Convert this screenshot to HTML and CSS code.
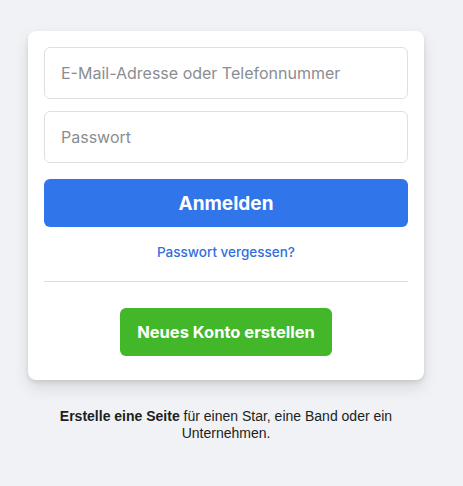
FILE: index.html
```html
<!DOCTYPE html>
<html lang="de">
<head>
<meta charset="utf-8">
<title>Anmelden</title>
<link rel="stylesheet" href="styles.css">
</head>
<body>
<div class="wrap">
  <div class="card">
    <form class="form">
      <input class="field" type="text" placeholder="E-Mail-Adresse oder Telefonnummer">
      <input class="field" type="password" placeholder="Passwort">
      <button class="login" type="button">Anmelden</button>
    </form>
    <a class="forgot" href="#">Passwort vergessen?</a>
    <div class="divider"></div>
    <div class="create-row">
      <button class="create" type="button">Neues Konto erstellen</button>
    </div>
  </div>
  <p class="note"><b>Erstelle eine Seite</b> für einen Star, eine Band oder ein Unternehmen.</p>
</div>
</body>
</html>
```
FILE: styles.css
```css
html, body {
  margin: 0;
  padding: 0;
  background: #f0f2f5;
}
body {
  font-family: Inter, "Liberation Sans", Arial, sans-serif;
}
.wrap {
  width: 396px;
  padding: 31px 0 0 28px;
}
.card {
  background: #fff;
  border-radius: 8px;
  box-shadow: 0 2px 4px rgba(0,0,0,.1), 0 8px 16px rgba(0,0,0,.1);
  padding: 16px 16px 24px;
  display: flex;
  flex-direction: column;
}
.form {
  display: flex;
  flex-direction: column;
  gap: 12px;
  margin: 0;
}
.field {
  box-sizing: border-box;
  height: 52px;
  border: 1px solid #dddfe2;
  border-radius: 6px;
  padding: 0 16px;
  font-family: Inter, "Liberation Sans", Arial, sans-serif;
  font-size: 16px;
  color: #1c1e21;
  outline: none;
}
.field::placeholder {
  color: #8a8d91;
}
.login {
  margin-top: 4px;
  height: 48px;
  border: none;
  border-radius: 6px;
  background: #3075ea;
  color: #fff;
  font-family: Inter, "Liberation Sans", Arial, sans-serif;
  font-size: 19px;
  font-weight: 700;
}
.forgot {
  margin-top: 16px;
  align-self: center;
  color: #2f6fe0;
  font-size: 13.5px;
  font-weight: 500;
  line-height: 19px;
  text-decoration: none;
}
.divider {
  margin-top: 19px;
  border-bottom: 1px solid #dadde1;
}
.create-row {
  display: flex;
  justify-content: center;
  margin-top: 26px;
}
.create {
  width: 212px;
  height: 48px;
  border: none;
  border-radius: 6px;
  background: #42b72a;
  color: #fff;
  font-family: Inter, "Liberation Sans", Arial, sans-serif;
  font-size: 16.5px;
  font-weight: 700;
}
.note {
  margin: 28px 20px 0;
  text-align: center;
  font-family: "Liberation Sans", Arial, sans-serif;
  font-size: 14px;
  line-height: 17px;
  color: #1c1e21;
}
.note b {
  font-weight: 700;
}
```
